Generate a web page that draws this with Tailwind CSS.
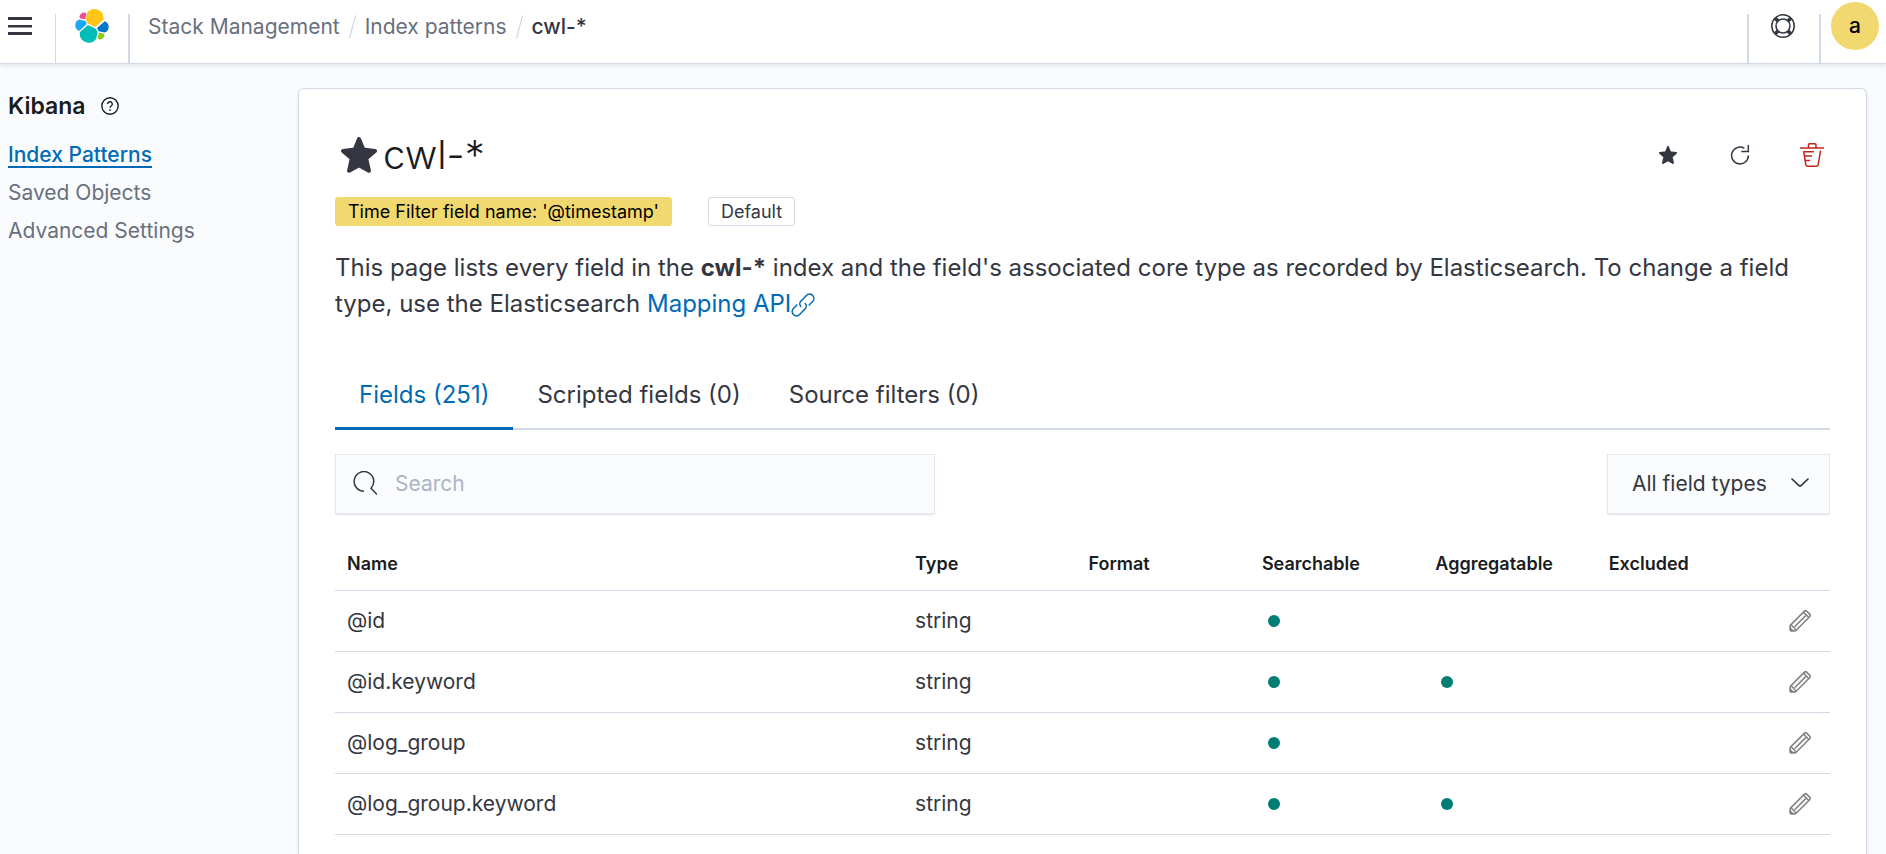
<!DOCTYPE html>
<html lang="en">
<head>
<meta charset="utf-8">
<meta name="viewport" content="width=device-width, initial-scale=1">
<title>Index patterns - Kibana</title>
<script src="https://cdn.jsdelivr.net/npm/@tailwindcss/browser@4"></script>
</head>
<body class="flex h-screen flex-col overflow-hidden bg-[#fafbfd] font-['Inter',sans-serif] text-[21px] leading-8 text-[#343741]">

<svg class="hidden" aria-hidden="true">
  <symbol id="star" viewBox="0 0 16 16"><path fill="currentColor" stroke="currentColor" stroke-width="1.8" stroke-linejoin="round" d="M8 .9l1.900 4.700 5.200.6-3.900 3.300 1.200 5.500L8 12.500l-4.400 2.500 1.200-5.500L.9 6.200l5.200-.6z"/></symbol>
  <symbol id="pencil" viewBox="0 0 16 16"><g fill="none" stroke="currentColor" stroke-linejoin="round"><path d="M1.5 10.900L11 1.400a1 1 0 0 1 1.400 0l2.200 2.200a1 1 0 0 1 0 1.400L5.100 14.500H2.200a.7.7 0 0 1-.7-.7z"/><path d="M4.400 11.800l7.400-7.400M10.300 2.100l3.600 3.600M2.200 10.700l3.100 3.100"/></g><path fill="currentColor" d="M1 11.600l3.600 3.400H2a1 1 0 0 1-1-1z"/></symbol>
  <symbol id="dot" viewBox="0 0 16 16"><circle cx="8" cy="8" r="4" fill="currentColor"/></symbol>
</svg>

<header class="relative flex h-16 shrink-0 items-end border-b border-[#d3dae6] bg-white shadow-[0_2px_4px_rgba(152,162,179,0.25)]">
  <div class="flex h-full w-[55px] items-start px-2 pt-[14px]">
    <button type="button" aria-label="Toggle navigation" class="h-6 w-6">
      <svg class="h-6 w-6" viewBox="0 0 24 24" fill="#343741"><path d="M0 3h24v3H0zM0 11h24v2.500H0zM0 18h24v3H0z"/></svg>
    </button>
  </div>
  <div class="flex h-[49px] items-start border-l border-r-2 border-[#d3dae6]">
    <a href="#" aria-label="Elastic home" class="-mt-[6px] block w-[72px] px-[18px]">
      <svg class="h-9 w-9" viewBox="0 0 32 32" fill="none">
        <path fill="#FFC517" d="M12.600 13.700l7 3.200 7.100-6.200c.1-.5.150-1 .150-1.600A8 8 0 0 0 12.200 4.600L11.100 10.600z" transform="translate(-.6 -.1)"/>
        <path fill="#02BCB7" d="M5.300 21.300c-.1.500-.150 1-.150 1.600a8 8 0 0 0 14.600 4.500l1.200-6-1.500-3L12.400 15.200z"/>
        <path fill="#F04E98" d="M5.200 9.100l4.800 1.150 1.050-5.450A3.800 3.800 0 0 0 5.200 9.100z"/>
        <path fill="#1BA9F5" d="M4.800 10.200A5.400 5.400 0 0 0 4.700 20.400l6.700-6.100-1.200-2.700z"/>
        <path fill="#93C90E" d="M21 27.200A3.800 3.800 0 0 0 26.800 22.900l-4.700-1.100z"/>
        <path fill="#0077CC" d="M21.900 20.600l5.300 1.250A5.400 5.400 0 0 0 27.300 11.700l-6.900 6z"/>
      </svg>
    </a>
  </div>
  <nav aria-label="Breadcrumbs" class="flex h-full flex-1 items-start pt-[11px] pl-[18px]">
    <ol class="flex items-center text-[#69707d]">
      <li><a href="#">Stack Management</a></li>
      <li aria-hidden="true" class="mx-3 h-6 w-px rotate-15 bg-[#c6cedd]"></li>
      <li><a href="#">Index patterns</a></li>
      <li aria-hidden="true" class="mx-3 h-6 w-px rotate-15 bg-[#c6cedd]"></li>
      <li aria-current="page" class="font-medium text-[#343741]">cwl-*</li>
    </ol>
  </nav>
  <div class="flex h-[49px] w-[72px] items-start justify-center border-l-2 border-[#d3dae6] pr-0.5">
    <button type="button" aria-label="Help" class="h-6 w-6">
      <svg class="h-6 w-6" viewBox="0 0 24 24" fill="none" stroke="#343741"><circle cx="12" cy="12" r="11.200" stroke-width="1.500"/><circle cx="12" cy="12" r="7" stroke-width="1.500"/><path stroke-width="3.600" d="M4.300 4.300l2.700 2.700M19.700 4.300l-2.700 2.700M4.300 19.700l2.700-2.700M19.700 19.700l-2.700-2.700"/></svg>
    </button>
  </div>
  <div class="h-[49px] w-[67px] border-l-2 border-[#d3dae6] pl-[10px]">
    <button type="button" aria-label="Account menu" class="-mt-3 flex h-12 w-12 items-center justify-center rounded-full bg-[#f1d86f] font-medium text-black">a</button>
  </div>
</header>

<div class="flex min-h-0 flex-1">
  <nav aria-label="Kibana" class="w-[298px] shrink-0 px-2 pt-6">
    <div class="flex items-center gap-4">
      <h2 class="text-[23px] leading-9 font-semibold text-[#1a1c21]">Kibana</h2>
      <button type="button" aria-label="About Kibana management" class="h-[18px] w-[18px]">
        <svg class="h-[18px] w-[18px]" viewBox="0 0 18 18" fill="none" stroke="#1a1c21" stroke-width="1.400"><circle cx="9" cy="9" r="8.200"/><path d="M6.700 7.100a2.300 2.300 0 1 1 3.500 1.900c-.8.500-1.200.9-1.200 1.800"/><path d="M9 12.300v1.500" stroke-width="1.600"/></svg>
      </button>
    </div>
    <ul class="mt-[15px] flex flex-col gap-[6px] text-[#69707d]">
      <li><a href="#" aria-current="page" class="font-medium text-[#006bb4] underline decoration-2 underline-offset-4">Index Patterns</a></li>
      <li><a href="#">Saved Objects</a></li>
      <li><a href="#">Advanced Settings</a></li>
    </ul>
  </nav>

  <main class="mt-6 mr-[19px] min-w-0 flex-1 rounded-t-md border border-b-0 border-[#d3dae6] bg-white px-9 pt-9 shadow-[0_2px_4px_rgba(152,162,179,0.2)]">
    <div class="flex items-start justify-between">
      <h1 class="flex items-center gap-[6px] pl-[6px] text-[40px] leading-[60px] font-light text-[#1a1c21]">
        <svg class="h-9 w-9 text-[#343741]" role="img" aria-label="Default index pattern"><use href="#star"/></svg>cwl-*
      </h1>
      <div class="-mr-3 flex gap-3 pt-[6px] text-[#343741]">
        <button type="button" aria-label="Set as default index" class="flex h-[48px] w-[60px] items-center justify-center"><svg class="h-[18px] w-[18px]"><use href="#star"/></svg></button>
        <button type="button" aria-label="Refresh field list" class="flex h-[48px] w-[60px] items-center justify-center">
          <svg class="h-5 w-5" viewBox="0 0 20 20" fill="none" stroke="currentColor" stroke-width="1.500"><path d="M18.400 10.500a8.400 8.400 0 1 1-4-7.100M18.300 0v6.600h-7"/></svg>
        </button>
        <button type="button" aria-label="Remove index pattern" class="flex h-[48px] w-[60px] items-center justify-center text-[#bd271e]">
          <svg class="h-6 w-6" viewBox="0 0 24 24" fill="none" stroke="currentColor" stroke-width="1.500"><path d="M0 5h24M8.500 5V2q0-1.200 1.200-1.200h5.100q1.200 0 1.200 1.200v3M3.600 8.200l2.200 13.400q.3 1.600 1.900 1.600h8.600q1.600 0 1.900-1.600L20.600 7.500M3.500 8.700H14M4.500 13h7.500M5.200 17.500h5"/></svg>
        </button>
      </div>
    </div>

    <div class="mt-3 flex gap-9 text-[18px] leading-[27px]">
      <span class="rounded-[3px] border border-[#f1d86f] bg-[#f1d86f] px-3 text-black">Time Filter field name: '@timestamp'</span>
      <span class="rounded-[3px] border border-[#d3dae6] bg-white px-3">Default</span>
    </div>

    <p class="mt-6 text-[24px] leading-9">This page lists every field in the <strong class="font-bold">cwl-*</strong> index and the field's associated core type as recorded by Elasticsearch. To change a field type, use the Elasticsearch <a href="#" class="text-[#006bb4]">Mapping API<svg class="inline h-6 w-6" viewBox="0 0 24 24" fill="none" stroke="currentColor" stroke-width="1.500" stroke-linecap="round" aria-hidden="true"><path d="M9.800 13.500a4 4 0 0 1 .3-5.600l5.300-5.500a4.200 4.200 0 0 1 6.200 6.100l-3.400 3.500M14.200 10.500a4 4 0 0 1-.3 5.600l-5.300 5.500a4.200 4.200 0 0 1-6.200-6.100l3.400-3.500"/></svg></a></p>

    <div role="tablist" class="mt-9 flex border-b-2 border-[#d3dae6] text-[24px] leading-9">
      <button type="button" role="tab" aria-selected="true" class="-mb-[2px] border-b-3 border-[#006bb4] px-6 pt-[19px] pb-[14px] text-[#006bb4]">Fields (251)</button>
      <button type="button" role="tab" aria-selected="false" class="px-6 pt-[19px] pb-[15px]">Scripted fields (0)</button>
      <button type="button" role="tab" aria-selected="false" class="px-6 pt-[19px] pb-[15px]">Source filters (0)</button>
    </div>

    <div class="mt-6 flex justify-between">
      <label class="flex h-[60px] w-[600px] items-center gap-[18px] border border-[#e2e6ee] bg-[#fbfcfd] px-[17px] shadow-[0_2px_2px_-1px_rgba(152,162,179,0.3)]">
        <svg class="mb-0.5 h-6 w-6 shrink-0" viewBox="0 0 24 24" fill="none" stroke="#343741" stroke-width="1.500" aria-hidden="true"><path d="M11 20.200A9.800 9.800 0 1 1 18 17.200l6 6.300" /></svg>
        <input type="search" aria-label="Search" placeholder="Search" class="min-w-0 flex-1 bg-transparent outline-none placeholder:text-[#abb4c4]">
      </label>
      <div class="grid h-[60px] w-[223px] items-center border border-[#e2e6ee] bg-[#fbfcfd] shadow-[0_2px_2px_-1px_rgba(152,162,179,0.3)]">
        <select aria-label="Field types" class="col-start-1 row-start-1 h-full w-full appearance-none bg-transparent pr-12 pl-6"><option>All field types</option></select>
        <svg class="pointer-events-none col-start-1 row-start-1 mr-5 h-[18px] w-[18px] justify-self-end" viewBox="0 0 18 18" fill="none" stroke="#343741" stroke-width="1.700" stroke-linecap="round" aria-hidden="true"><path d="M1 4l7 6.600q1 .8 2 0L17 4"/></svg>
      </div>
    </div>

    <table class="mt-6 w-full table-fixed text-left">
      <thead class="text-[18px] leading-[27px] text-[#1a1c21]">
        <tr class="h-[52px] border-b border-[#d3dae6]">
          <th scope="col" class="w-[38%] px-3 font-semibold">Name</th>
          <th scope="col" class="w-[11.6%] px-3 font-semibold">Type</th>
          <th scope="col" class="w-[11.6%] px-3 font-semibold">Format</th>
          <th scope="col" class="w-[11.6%] px-3 font-semibold">Searchable</th>
          <th scope="col" class="w-[11.6%] px-3 font-semibold">Aggregatable</th>
          <th scope="col" class="w-[11.6%] px-3 font-semibold">Excluded</th>
          <th scope="col" aria-label="Actions"></th>
        </tr>
      </thead>
      <tbody>
        <tr class="h-[61px] border-b border-[#d3dae6]">
          <td class="px-3">@id</td><td class="px-3">string</td><td></td>
          <td class="px-3"><svg class="h-6 w-6 text-[#017d73]" role="img" aria-label="Is searchable"><use href="#dot"/></svg></td>
          <td></td><td></td>
          <td><button type="button" aria-label="Edit @id" class="ml-[18px] block text-[#808080]"><svg class="h-6 w-6"><use href="#pencil"/></svg></button></td>
        </tr>
        <tr class="h-[61px] border-b border-[#d3dae6]">
          <td class="px-3">@id.keyword</td><td class="px-3">string</td><td></td>
          <td class="px-3"><svg class="h-6 w-6 text-[#017d73]" role="img" aria-label="Is searchable"><use href="#dot"/></svg></td>
          <td class="px-3"><svg class="h-6 w-6 text-[#017d73]" role="img" aria-label="Is aggregatable"><use href="#dot"/></svg></td><td></td>
          <td><button type="button" aria-label="Edit @id.keyword" class="ml-[18px] block text-[#808080]"><svg class="h-6 w-6"><use href="#pencil"/></svg></button></td>
        </tr>
        <tr class="h-[61px] border-b border-[#d3dae6]">
          <td class="px-3">@log_group</td><td class="px-3">string</td><td></td>
          <td class="px-3"><svg class="h-6 w-6 text-[#017d73]" role="img" aria-label="Is searchable"><use href="#dot"/></svg></td>
          <td></td><td></td>
          <td><button type="button" aria-label="Edit @log_group" class="ml-[18px] block text-[#808080]"><svg class="h-6 w-6"><use href="#pencil"/></svg></button></td>
        </tr>
        <tr class="h-[61px] border-b border-[#d3dae6]">
          <td class="px-3">@log_group.keyword</td><td class="px-3">string</td><td></td>
          <td class="px-3"><svg class="h-6 w-6 text-[#017d73]" role="img" aria-label="Is searchable"><use href="#dot"/></svg></td>
          <td class="px-3"><svg class="h-6 w-6 text-[#017d73]" role="img" aria-label="Is aggregatable"><use href="#dot"/></svg></td><td></td>
          <td><button type="button" aria-label="Edit @log_group.keyword" class="ml-[18px] block text-[#808080]"><svg class="h-6 w-6"><use href="#pencil"/></svg></button></td>
        </tr>
      </tbody>
    </table>
  </main>
</div>
</body>
</html>
